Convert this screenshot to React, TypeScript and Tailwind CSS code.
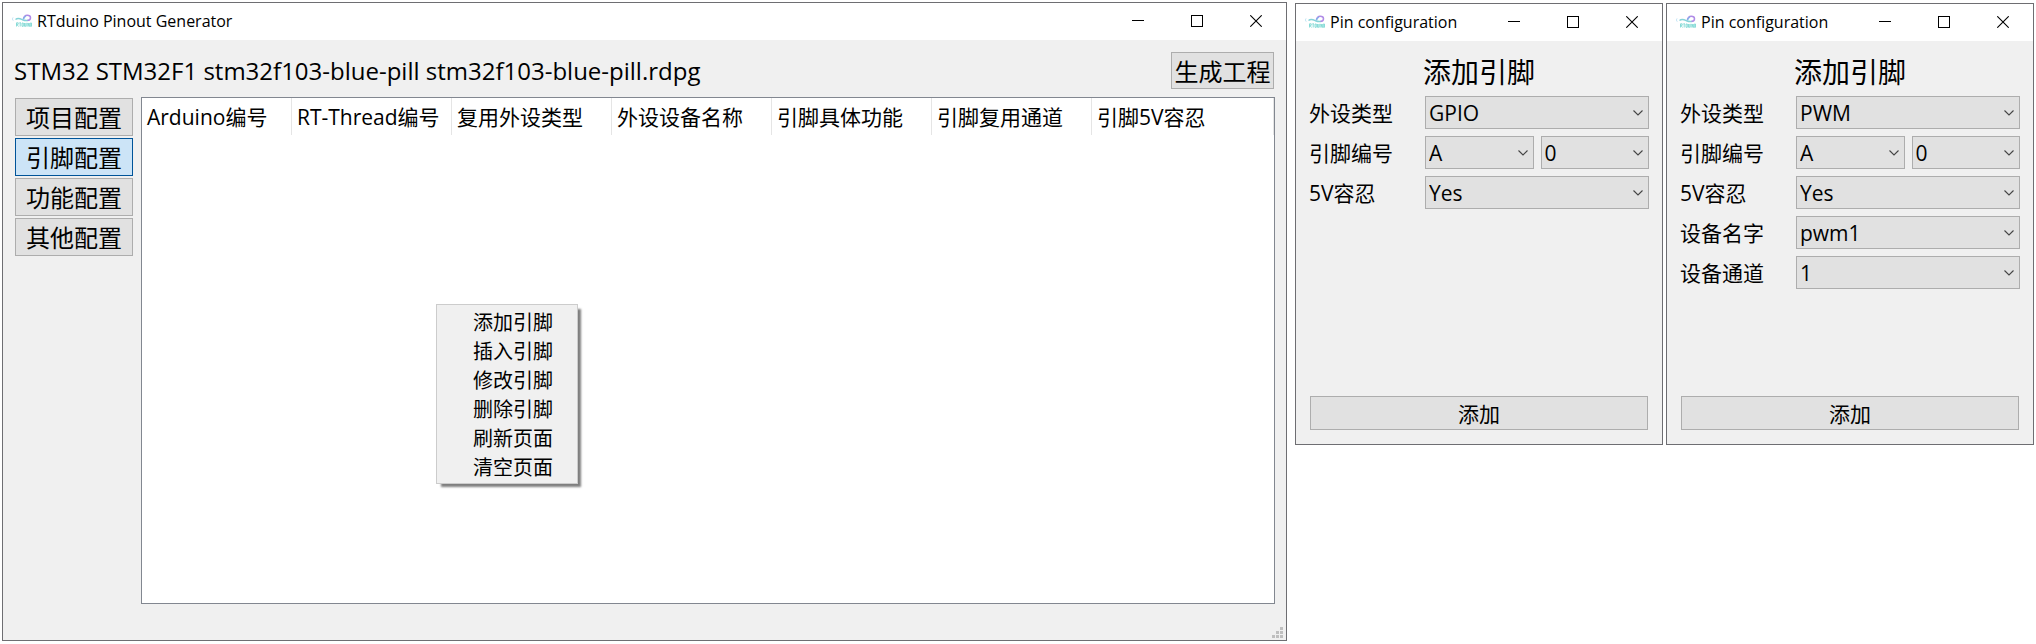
import type { ReactNode } from "react";

function Logo() {
  return (
    <svg width="20" height="14" viewBox="0 0 20 14" fill="none" aria-hidden="true" className="shrink-0">
      <path d="M1 3.5C.3 4.6.4 5.6 1.2 6.6" stroke="#b9dff2" strokeWidth="1" />
      <path d="M3.5 5.500C6 3.600 8 4.600 10.500 5.700C12.500 6.500 14.500 6.800 16.500 6.300" stroke="#86d3d8" strokeWidth="1.500" />
      <path d="M11.500 5C11.500 2.800 13.300 1.300 15.200 1.300C17.300 1.300 18.500 2.300 18.500 3.700C18.500 5.200 17.300 6.300 15.500 6.300" stroke="#b08be6" strokeWidth="1.500" />
      <path d="M11.200 5.200C12 3.500 13 2.600 14 2" stroke="#7fb6ea" strokeWidth="1.300" />
      <path d="M4.500 12.500V8.800H6.200V10.300H4.800L6.500 12.500M7.300 8.800H9M8.200 9V12.500M10 9V12.300H11.300V9H10M12.500 9V12.300H13.800V9M14.900 8.800V12.500M16 12.500V9L17.300 12.500V9M18.300 9H19.500V12.300H18.300V9" stroke="#7fd8d4" strokeWidth=".9" />
    </svg>
  );
}

function TitleBar({ title }: { title: string }) {
  const control = "flex h-full w-[59px] items-center justify-center";
  return (
    <div className="flex h-[37px] items-center bg-white pb-[2px] pl-[9px] pr-px">
      <Logo />
      <h1 className="ml-[5px] flex-1 whitespace-nowrap text-[16px] leading-[20px]">{title}</h1>
      <button type="button" aria-label="Minimize" className={control}>
        <svg width="12" height="12" shapeRendering="crispEdges"><path d="M0 5.500H12" stroke="#000" /></svg>
      </button>
      <button type="button" aria-label="Maximize" className={control}>
        <svg width="12" height="12" shapeRendering="crispEdges"><rect x=".5" y=".5" width="11" height="11" fill="none" stroke="#000" /></svg>
      </button>
      <button type="button" aria-label="Close" className={control}>
        <svg width="12" height="12"><path d="M.3 .3L11.700 11.700M11.700 .3L.3 11.700" stroke="#000" strokeWidth="1.100" /></svg>
      </button>
    </div>
  );
}

function Select({ label, id, options }: { label: string; id: string; options: string[] }) {
  return (
    <div className="relative min-w-0 flex-1">
      <select
        id={id}
        aria-label={label}
        className="block h-[33px] w-full appearance-none border border-[#adadad] bg-[#e1e1e1] pl-[3px] pr-[24px] text-[21px] leading-[28px]"
      >
        {options.map((o) => (
          <option key={o}>{o}</option>
        ))}
      </select>
      <svg width="10" height="6" viewBox="0 0 10 6" fill="none" className="pointer-events-none absolute right-[6px] top-[14px]">
        <path d="M.5 .5L5 5L9.500 .5" stroke="#444" strokeWidth="1.100" />
      </svg>
    </div>
  );
}

function Row({ label, htmlFor, children }: { label: string; htmlFor: string; children: ReactNode }) {
  return (
    <div className="flex h-[33px] items-center">
      <label htmlFor={htmlFor} className="w-[116px] shrink-0 text-[21px] leading-[28px]">{label}</label>
      <div className="flex min-w-0 flex-1 gap-[7px]">{children}</div>
    </div>
  );
}

function PinDialog({ name, type, device, channel }: { name: string; type: string; device?: string; channel?: string }) {
  return (
    <section className="mt-px flex min-h-[442px] w-[368px] shrink-0 flex-col border border-[#6e6e72] bg-[#f0f0f0]">
      <TitleBar title="Pin configuration" />
      <div className="flex flex-1 flex-col px-[13px] pb-[14px] pt-[13px]">
        <h2 className="text-center text-[28px] leading-[36px]">添加引脚</h2>
        <form className="mt-[6px] flex flex-1 flex-col gap-[7px]">
          <Row label="外设类型" htmlFor={`${name}-type`}>
            <Select id={`${name}-type`} label="外设类型" options={[type, type === "GPIO" ? "PWM" : "GPIO"]} />
          </Row>
          <Row label="引脚编号" htmlFor={`${name}-port`}>
            <Select id={`${name}-port`} label="引脚编号" options={["A", "B", "C"]} />
            <Select id={`${name}-pin`} label="引脚编号" options={["0", "1", "2"]} />
          </Row>
          <Row label="5V容忍" htmlFor={`${name}-5v`}>
            <Select id={`${name}-5v`} label="5V容忍" options={["Yes", "No"]} />
          </Row>
          {device && (
            <Row label="设备名字" htmlFor={`${name}-device`}>
              <Select id={`${name}-device`} label="设备名字" options={[device]} />
            </Row>
          )}
          {channel && (
            <Row label="设备通道" htmlFor={`${name}-channel`}>
              <Select id={`${name}-channel`} label="设备通道" options={[channel]} />
            </Row>
          )}
          <button type="button" className="mx-px mt-auto h-[34px] border border-[#adadad] bg-[#e1e1e1] pt-px text-[21px] leading-[28px]">
            添加
          </button>
        </form>
      </div>
    </section>
  );
}

const tabs = ["项目配置", "引脚配置", "功能配置", "其他配置"];
const firstColumn = "Arduino编号";
const columns = ["RT-Thread编号", "复用外设类型", "外设设备名称", "引脚具体功能", "引脚复用通道"];
const menuItems = ["添加引脚", "插入引脚", "修改引脚", "删除引脚", "刷新页面", "清空页面"];

export default function App() {
  const cell = "h-[37px] whitespace-nowrap border-r border-[#e5e5e5] pl-[5px] text-left text-[21px] font-normal leading-[28px]";
  return (
    <div className="flex items-start bg-white p-[2px] font-['Open_Sans','Noto_Sans_CJK_SC',sans-serif] text-black">
      <main className="mr-[8px] min-w-0 flex-1 border border-[#6e6e72] bg-[#f0f0f0]">
        <TitleBar title="RTduino Pinout Generator" />
        <div className="flex items-center justify-between pl-[11px] pr-[12px] pt-[12px]">
          <p className="whitespace-nowrap text-[24px] leading-[36px]">STM32 STM32F1 stm32f103-blue-pill stm32f103-blue-pill.rdpg</p>
          <button type="button" className="h-[37px] w-[103px] border border-[#adadad] bg-[#e1e1e1] pt-[2px] text-[24px] leading-[32px]">
            生成工程
          </button>
        </div>
        <div className="mt-[8px] flex gap-[8px] pl-[12px] pr-[11px]">
          <nav className="flex w-[118px] shrink-0 flex-col gap-[2px] pt-px">
            {tabs.map((t) => (
              <button
                key={t}
                type="button"
                className={
                  t === "引脚配置"
                    ? "h-[38px] border border-[#005499] bg-[#cce4f7] pt-[2px] text-[24px] leading-[32px]"
                    : "h-[38px] border border-[#adadad] bg-[#e1e1e1] pt-[2px] text-[24px] leading-[32px]"
                }
              >
                {t}
              </button>
            ))}
          </nav>
          <div className="relative min-h-[507px] min-w-0 flex-1 border border-[#828790] bg-white">
            <table className="w-full table-fixed border-separate border-spacing-0">
              <thead>
                <tr>
                  <th className={`w-[150px] ${cell}`}>{firstColumn}</th>
                  {columns.map((c) => (
                    <th key={c} className={`w-[160px] ${cell}`}>{c}</th>
                  ))}
                  <th className={cell}>引脚5V容忍</th>
                </tr>
              </thead>
            </table>
            <ul
              role="menu"
              className="absolute left-[294px] top-[206px] w-[142px] border border-[#cccccc] bg-[#f0f0f0] pb-px pt-[3px] shadow-[4px_4px_2px_-1px_rgba(0,0,0,0.5)]"
            >
              {menuItems.map((m) => (
                <li key={m} role="none">
                  <button type="button" role="menuitem" className="block h-[29px] w-full pl-[36px] text-left text-[20px] leading-[29px]">
                    {m}
                  </button>
                </li>
              ))}
            </ul>
          </div>
        </div>
        <div className="flex h-[36px] items-end justify-end pb-[2px] pr-[3px]">
          <svg width="11" height="11" fill="#bfbfbf" shapeRendering="crispEdges" aria-hidden="true">
            <path d="M8 0h3v3h-3zM4 4h3v3h-3zM8 4h3v3h-3zM0 8h3v3h-3zM4 8h3v3h-3zM8 8h3v3h-3z" />
          </svg>
        </div>
      </main>
      <div className="flex shrink-0 gap-[3px]">
        <PinDialog name="gpio" type="GPIO" />
        <PinDialog name="pwm" type="PWM" device="pwm1" channel="1" />
      </div>
    </div>
  );
}
